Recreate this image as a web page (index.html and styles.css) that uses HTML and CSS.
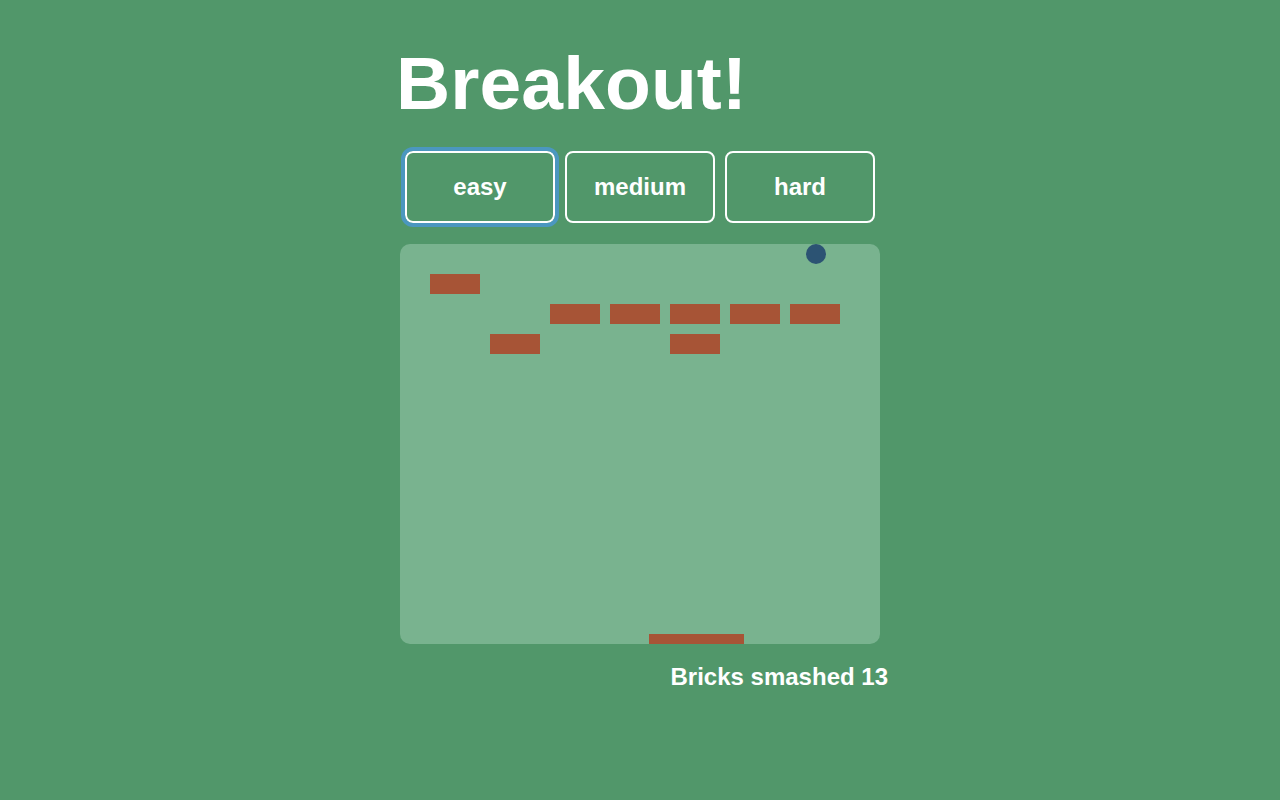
FILE: index.html
```html
<!DOCTYPE html>
<html lang="en">
<head>
<meta charset="utf-8">
<title>Breakout!</title>
<link rel="stylesheet" href="styles.css">
</head>
<body>
<main class="app">
  <h1 class="title">Breakout!</h1>
  <div class="levels">
    <button class="level is-focused">easy</button>
    <button class="level">medium</button>
    <button class="level">hard</button>
  </div>
  <div class="board">
    <div class="bricks">
      <span class="brick" style="grid-row:1;grid-column:1"></span>
      <span class="brick" style="grid-row:2;grid-column:3"></span>
      <span class="brick" style="grid-row:2;grid-column:4"></span>
      <span class="brick" style="grid-row:2;grid-column:5"></span>
      <span class="brick" style="grid-row:2;grid-column:6"></span>
      <span class="brick" style="grid-row:2;grid-column:7"></span>
      <span class="brick" style="grid-row:3;grid-column:2"></span>
      <span class="brick" style="grid-row:3;grid-column:5"></span>
    </div>
    <span class="ball"></span>
    <span class="paddle"></span>
  </div>
  <div class="score">Bricks smashed 13</div>
</main>
</body>
</html>
```

FILE: styles.css
```css
html, body {
  margin: 0;
  padding: 0;
  background: #51976a;
  height: 100%;
}

body {
  font-family: "Liberation Sans", Arial, Helvetica, sans-serif;
  color: #ffffff;
}

.app {
  width: 480px;
  margin: 0 auto;
  display: flex;
  flex-direction: column;
}

.title {
  margin: 40px 0 0 -4px;
  font-size: 75px;
  font-weight: 700;
  line-height: normal;
  letter-spacing: 0.1px;
}

.levels {
  display: flex;
  margin-top: 20px;
}

.level {
  width: 150px;
  height: 72px;
  margin: 5px;
  box-sizing: border-box;
  border: 2px solid #ffffff;
  border-radius: 8px;
  background: transparent;
  color: #ffffff;
  font-family: "Liberation Sans", Arial, Helvetica, sans-serif;
  font-size: 24px;
  font-weight: 700;
  padding: 0;
  cursor: pointer;
}

.level.is-focused {
  outline: 4px solid rgba(74, 150, 206, 0.85);
  outline-offset: 0;
  border-radius: 8px;
}

.board {
  position: relative;
  margin-top: 16px;
  width: 480px;
  height: 400px;
  background: #79b38f;
  border-radius: 10px;
}

.bricks {
  display: grid;
  grid-template-columns: repeat(7, 50px);
  grid-template-rows: repeat(3, 20px);
  gap: 10px;
  padding: 30px 0 0 30px;
}

.brick {
  display: block;
  background: #a75436;
}

.ball {
  position: absolute;
  left: 406px;
  top: 0;
  width: 20px;
  height: 20px;
  border-radius: 50%;
  background: #2c5373;
}

.paddle {
  position: absolute;
  left: 249px;
  bottom: 0;
  width: 95px;
  height: 10px;
  background: #a75436;
}

.score {
  display: flex;
  justify-content: flex-end;
  margin: 19px -8px 0 0;
  font-size: 24px;
  font-weight: 700;
  line-height: normal;
}
```
